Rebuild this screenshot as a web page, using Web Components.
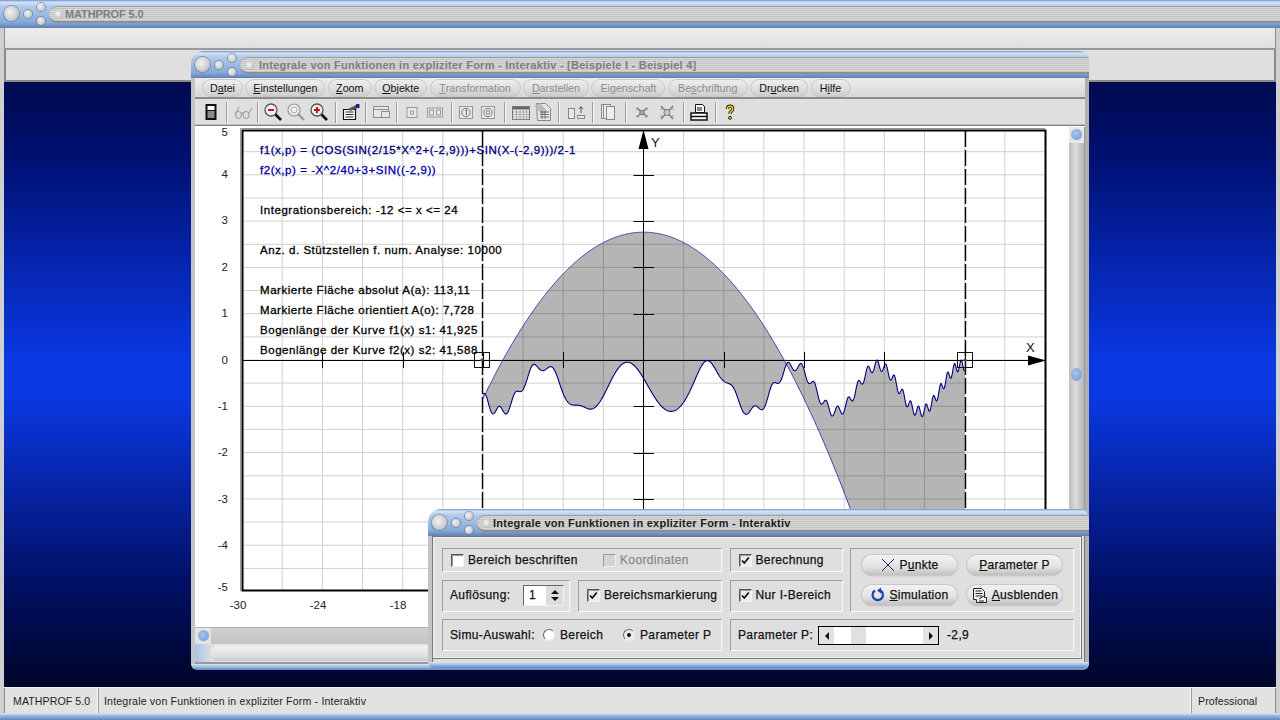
<![CDATA[<!DOCTYPE html>
<html lang="de"><head><meta charset="utf-8"><title>MATHPROF 5.0</title>
<style>html,body{margin:0;padding:0;background:#000;font:11px "Liberation Sans",Arial,sans-serif;overflow:hidden}</style>
<script>
const FONT='"Liberation Sans",Arial,sans-serif';
const LABEL=`font:12px ${FONT};-webkit-text-stroke:.25px currentColor;letter-spacing:.37px;color:#111;white-space:nowrap;`;
function el(name,html,hook){
  customElements.define(name,class extends HTMLElement{
    constructor(){super();const r=this.attachShadow({mode:'open'});
      r.innerHTML=typeof html==='function'?html(this):html;}
    connectedCallback(){if(hook)hook(this,this.shadowRoot);}
  });
}
el('mp-app',`<style>
:host{display:flex;flex-direction:column;width:1280px;height:720px;overflow:hidden;background:#cfcfcf;position:relative}
.side{flex:1;display:flex;flex-direction:column;padding:0 4px 0 4px;background:#cfcfcf;min-height:0}
.m{height:20px;background:linear-gradient(#ececec,#e0e0e0);border-left:1px solid #8a8a8a;border-right:1px solid #8a8a8a;border-bottom:2px solid #9a9a9a;flex:none}
.t{height:30px;background:#dfdfdf;border-left:2px solid #8a8a8a;border-right:2px solid #8a8a8a;border-bottom:2px solid #8a8a8a;flex:none}
.d{flex:1;position:relative;background:linear-gradient(180deg,#000a4e 0,#001070 12%,#0625b0 30%,#0a38e2 46%,#0a38e2 52%,#0725aa 66%,#000f60 84%,#000628 100%);min-height:0}
.e{height:7px;flex:none;background:linear-gradient(#dce8f6,#9ab8e0 40%,#5f86c0)}
</style>
<slot name="caption"></slot>
<div class="side"><div class="m"></div><div class="t"></div><div class="d"><slot></slot></div><slot name="status"></slot></div>
<div class="e"></div>`);

el('mp-caption',`<style>
:host{display:flex;align-items:center;height:var(--cap-h,27px);flex:none;box-sizing:border-box;position:relative;padding-left:3px;border-radius:inherit;
 background:linear-gradient(#6f97d2 0,#d5e3f4 8%,#b2cbea 22%,#86a9da 80%,#5f80b5 100%)}
.b{position:absolute;border-radius:50%;background:radial-gradient(circle at 40% 40%,#f2f2f2,#d0d0d0 55%,#a0a0a0);box-shadow:0 0 0 1px rgba(90,110,150,.55)}
.b1{left:4px;top:6px;width:15px;height:15px}.b2{left:24px;top:10px;width:8px;height:8px}
.b3{left:37px;top:3px;width:8px;height:8px}.b4{left:37px;top:17px;width:8px;height:8px}
.bar{position:absolute;left:49px;right:0;top:6px;height:17px;border-radius:9px 0 0 9px;box-sizing:border-box;display:flex;align-items:center;
 background:repeating-linear-gradient(#d8d8d8 0 1px,#c4c4c4 1px 2px);border-bottom:2px solid #8f8f8f;border-top:1px solid #9a9a9a}
.o{width:9px;height:9px;margin-left:5px;border-radius:50%;background:radial-gradient(circle at 45% 40%,#fafafa,#c0c0c0 70%,#8c8c8c);flex:none}
.txt{margin-left:var(--cap-ml,2px);font:bold 11px ${FONT};color:#1c1c1c;letter-spacing:var(--cap-ls,.25px);white-space:nowrap}
:host([inactive]) .txt{color:#7e7e7e}
</style>
<i class="b b1"></i><i class="b b2"></i><i class="b b3"></i><i class="b b4"></i>
<div class="bar"><i class="o"></i><span class="txt"><slot></slot></span></div>`);

el('mp-window',`<style>
:host{position:absolute;display:flex;flex-direction:column;box-sizing:border-box;border-radius:13px 9px 0 0;z-index:1}
.body{flex:1;min-height:0;display:flex;flex-direction:column;background:#dfdfdf;border-left:4px solid #c4c4c4;border-right:4px solid #b0b0b0;box-shadow:inset 1px 0 0 #777,inset -1px 0 0 #777}
.edge{height:6px;flex:none;border-radius:0 0 9px 9px;background:linear-gradient(#dbe6f5,#a8c2e6 40%,#5f86c0)}
::slotted(mp-caption){border-radius:13px 9px 0 0}
</style><slot name="caption"></slot><div class="body"><slot></slot></div><div class="edge"></div>`);

el('mp-menubar',`<style>
:host{display:flex;height:21px;padding:1px 0 0 7px;box-sizing:border-box;gap:2.4px;flex:none;background:linear-gradient(#ececec,#d8d8d8);border-bottom:2px solid #8c8c8c}
</style><slot></slot>`);
el('mp-menu',`<style>
:host{display:flex;align-items:center;justify-content:center;box-sizing:border-box;height:18px;border-radius:11px;font:10.7px ${FONT};color:#111;white-space:nowrap;
 background:linear-gradient(#f0f0f0,#d8d8d8 70%,#cacaca);box-shadow:inset 0 0 0 1px #c8c8c8}
:host([disabled]){color:#8c8c8c}
</style><slot></slot>`);

el('mp-toolbar',`<style>
:host{display:flex;align-items:center;height:27px;box-sizing:border-box;padding:0 0 0 5px;flex:none;background:#dfdfdf;border-bottom:1px solid #808080;box-shadow:inset 0 -1px 0 #c0c0c0}
</style><slot></slot>`);

const ICONS={
 device:`<rect x="6.5" y="4" width="11" height="16" fill="#111"/><rect x="8.5" y="6" width="7" height="4" fill="#fff"/><rect x="8.5" y="11" width="7" height="7" fill="#8a8a8a"/>`,
 glasses:`<g fill="none" stroke="#999" stroke-width="1"><ellipse cx="7.5" cy="15" rx="3" ry="3.6"/><ellipse cx="15" cy="15" rx="3" ry="3.6"/><path d="M10 13.5q2-1.5 3 0M4.8 13.5L8 7M17.8 13.5L21 8"/></g>`,
 zoomminus:`<circle cx="10" cy="10" r="6" fill="#eee" stroke="#555" stroke-width="1.3"/><path d="M14.5 14.5L20 20" stroke="#111" stroke-width="2.6"/><path d="M7 10h6" stroke="#c01818" stroke-width="2"/>`,
 zoomgray:`<circle cx="10" cy="10" r="6" fill="#f0f0f0" stroke="#999" stroke-width="1.2"/><circle cx="10" cy="10" r="3" fill="none" stroke="#aaa"/><path d="M14.5 14.5L20 20" stroke="#999" stroke-width="2.4"/>`,
 zoomplus:`<circle cx="10" cy="10" r="6" fill="#eee" stroke="#555" stroke-width="1.3"/><path d="M14.5 14.5L20 20" stroke="#111" stroke-width="2.6"/><path d="M7 10h6M10 7v6" stroke="#c01818" stroke-width="2"/>`,
 form:`<path d="M4.5 9.5h12v10h-12z" fill="#fff" stroke="#111" stroke-width="1.2"/><path d="M6.5 12h8M6.5 14.5h8M6.5 17h8" stroke="#222"/><path d="M9 9l8-4 2 3-8 3z" fill="#555"/><path d="M17 4h3.5v4H17z" fill="#1a2a90"/>`,
 win:`<g fill="#e6e6e6" stroke="#8e8e8e"><rect x="4.5" y="6.5" width="15" height="11"/><path d="M4.5 9.5h15" fill="none"/><rect x="12.5" y="11.5" width="8" height="6"/></g>`,
 box1:`<rect x="7" y="7.5" width="10" height="10" fill="#e8e8e8" stroke="#999"/><rect x="10.5" y="11" width="3" height="3" fill="none" stroke="#999"/>`,
 box2:`<g fill="#e8e8e8" stroke="#999"><rect x="4.5" y="8" width="15" height="9"/><rect x="6.5" y="10" width="4" height="5"/><rect x="13.5" y="10" width="4" height="5"/></g>`,
 circ1:`<rect x="5.5" y="6.5" width="13" height="12" fill="#e8e8e8" stroke="#999"/><circle cx="12" cy="12.5" r="4.2" fill="none" stroke="#777"/><path d="M11 10.7l1.5-1v5.5" fill="none" stroke="#777"/>`,
 circ2:`<rect x="5.5" y="6.5" width="13" height="12" fill="#e8e8e8" stroke="#999"/><circle cx="12" cy="12.5" r="4.2" fill="none" stroke="#777"/><circle cx="12" cy="12.5" r="1.8" fill="none" stroke="#777"/>`,
 table:`<rect x="3.5" y="6.5" width="17" height="13" fill="#eee" stroke="#777"/><rect x="4" y="7" width="16" height="2.5" fill="#666"/><path d="M4 12h16M4 14.5h16M4 17h16M7.5 9.5v10M11 9.5v10M14.5 9.5v10M17.5 9.5v10" stroke="#aaa"/>`,
 calc:`<path d="M5.5 3.5h9l5 5v12h-13z" fill="#e6e6e6" stroke="#888"/><path d="M3 6l6-3 8 9-5 3z" fill="#bbb"/><path d="M9 12h9M9 14.5h9M9 17h9M11 11v8M14 11v8" stroke="#777"/>`,
 arrows:`<g fill="#e8e8e8" stroke="#888"><rect x="4.5" y="8.5" width="6" height="10"/><rect x="13.5" y="15.5" width="7" height="3"/></g><path d="M17 13V7M15 9L17 6.5 19 9" fill="none" stroke="#555"/>`,
 pages:`<g fill="#eee" stroke="#888"><rect x="5.5" y="4.5" width="7" height="14"/><rect x="7.5" y="4.5" width="7" height="14"/><rect x="10.5" y="6.5" width="8" height="13"/></g>`,
 cross1:`<path d="M7 8l10 9M17 8L7 17" stroke="#777" stroke-width="1.5"/><circle cx="12" cy="12.5" r="2.3" fill="#aaa" stroke="#777"/><path d="M6 10l2-3M16 7l2 3M6 15l2 3M16 18l2-3" stroke="#999"/>`,
 cross2:`<path d="M6 6l12 13M18 6L6 19" stroke="#777" stroke-width="1.3"/><circle cx="12" cy="12.5" r="3" fill="#ccc" stroke="#777"/><path d="M5 9h4M15 9h4M5 16h4M15 16h4" stroke="#999"/>`,
 printer:`<path d="M8.5 4.5h7l2 2v6h-9z" fill="#fff" stroke="#111"/><path d="M10 8h5M10 10h5" stroke="#111"/><path d="M4 13h16v7H4z" fill="#fff" stroke="#111" stroke-width="1.5"/><path d="M4 16.5h16" stroke="#111" stroke-width="1.5"/>`,
 help:`<path d="M9.3 9q0-2.8 2.7-2.8t2.7 2.7q0 1.6-1.7 2.6-1 .8-1 2.5" fill="none" stroke="#222" stroke-width="3.2"/><path d="M9.3 9q0-2.8 2.7-2.8t2.7 2.7q0 1.6-1.7 2.6-1 .8-1 2.5" fill="none" stroke="#e8d020" stroke-width="1.5"/><circle cx="12" cy="17.8" r="1.5" fill="#e8d020" stroke="#222"/>`
};
el('mp-tool',`<style>:host{display:flex;justify-content:flex-end;align-items:center;height:26px;flex:none}
#h{display:flex;justify-content:center;align-items:center;flex:none;width:0}
svg{flex:none;display:block}i{display:block;flex:none;width:1px;height:21px;background:#9a9a9a;box-shadow:1px 0 0 #f6f6f6}</style><span id="h"></span>`,(e,r)=>{
  e.style.width=e.getAttribute('w')+'px';
  const n=e.getAttribute('i');
  r.getElementById('h').innerHTML=n==='sep'?'<i></i>':`<svg width="24" height="24" viewBox="0 0 24 24" aria-hidden="true">${ICONS[n]}</svg>`;
});

el('mp-client',`<style>
:host{flex:1;min-height:0;display:grid;grid-template-columns:1fr 16px;grid-template-rows:1fr 17px 18px;background:#fff;border-top:1px solid #fff;border-bottom:2px solid #999}
.v{grid-area:1/2/3/3;position:relative;background:linear-gradient(90deg,#bdbdbd,#dcdcdc 45%,#b6b6b6);border-right:1px solid #999}
.v i{position:absolute;left:2px;width:11px;border-radius:50%;background:radial-gradient(circle at 40% 40%,#a8c4ea,#6f97d2)}
.v .a{top:2px;height:11px}.v .b{top:241px;height:13px}
.vt{position:absolute;left:0;right:0;top:0;height:16px;background:#e8e8e8}
.h{grid-area:2/1/3/2;position:relative;background:linear-gradient(#cfcfcf,#c4c4c4);border-top:1px solid #b0b0b0}
.h i{position:absolute;left:3px;top:2px;width:11px;height:11px;border-radius:50%;background:radial-gradient(circle at 40% 40%,#a8c4ea,#6f97d2)}
.hl{position:absolute;left:0;top:0;bottom:0;width:16px;background:#e4e4e4}
.r{grid-area:3/1/4/3;background:linear-gradient(90deg,#a9c4e8,#e4e4e4 20px);padding:2px 0 1px 15px;box-sizing:border-box}
.r b{display:block;height:100%;border-radius:8px 0 0 8px;background:linear-gradient(#f2f2f2,#dedede 70%,#c8c8c8)}
.p{grid-area:1/1/2/2;min-height:0;position:relative;overflow:hidden}
</style><div class="p"><slot></slot></div><div class="v"><div class="vt"></div><i class="a"></i><i class="b"></i></div><div class="h"><div class="hl"></div><i></i></div><div class="r"><b></b></div>`);

const P=-2.9, X0=643.5, UX=13.38, Y0=360, UY=46.3;
const sx=x=>X0+UX*x, sy=y=>Y0-UY*y;
const f1=x=>(Math.cos(Math.sin(2/15*x*x+P))+Math.sin(x-P))/2-1;
const f2=x=>-x*x/40+3+Math.sin(P);
function plotSVG(){
  const l=242.5,r=1045.5,t=130.5,b=590.5; let s='';
  for(let u=-27;u<30;u+=3)s+=`M${sx(u).toFixed(1)} ${t}V${b}`;
  let g='';for(let v=-4.5;v<=4.5;v+=.5)g+=`M${l} ${sy(v).toFixed(1)}H${r}`;
  const a=[];
  for(let x=-12;x<=24.001;x+=.04)a.push(x);
  const p1=a.map(x=>`${sx(x).toFixed(2)} ${sy(f1(x)).toFixed(2)}`);
  const p2=a.map(x=>`${sx(x).toFixed(2)} ${sy(f2(x)).toFixed(2)}`);
  let ticks='';
  [-24,-18,-12,-6,6,12,18,24].forEach(u=>ticks+=`M${Math.round(sx(u))+.5} 352V368`);
  [-4,-3,-2,-1,1,2,3,4].forEach(v=>ticks+=`M633.5 ${Math.round(sy(v))+.5}H654`);
  const yl=[[5,132],[4,174],[3,220],[2,267],[1,313],[0,360],[-1,406],[-2,452],[-3,499],[-4,545],[-5,587]];
  const xl=[[-30,238],[-24,318],[-18,398]];
  const info=[['f1(x,p) = (COS(SIN(2/15*X^2+(-2,9)))+SIN(X-(-2,9)))/2-1',154,'#000080'],
   ['f2(x,p) = -X^2/40+3+SIN((-2,9))',174,'#0000a8'],
   ['Integrationsbereich: -12 <= x <= 24',214,'#000'],
   ['Anz. d. Stützstellen f. num. Analyse: 10000',254,'#000'],
   ['Markierte Fläche absolut A(a): 113,11',294,'#000'],
   ['Markierte Fläche orientiert A(o): 7,728',314,'#000'],
   ['Bogenlänge der Kurve f1(x) s1: 41,925',334,'#000'],
   ['Bogenlänge der Kurve f2(x) s2: 41,588',354,'#000']];
  const esc=t=>t.replace(/&/g,'&amp;').replace(/</g,'&lt;');
  const mark=cx=>`<rect x="${cx-7.5}" y="352.5" width="15" height="15" fill="none" stroke="#111"/><path d="M${cx} 358l2 2-2 2-2-2z" fill="#555"/>`;
  return `<svg width="874" height="500" viewBox="195 127 874 500" font-family='"Liberation Sans",Arial,sans-serif'>
  <rect x="195" y="127" width="874" height="500" fill="#fff"/>
  <path d="${s}${g}" stroke="#d0d0d0" fill="none"/>
  <path d="M${p1.join('L')}L${p2.slice().reverse().join('L')}Z" fill="rgba(0,0,0,.29)" stroke="none"/>
  <path d="M240.5 128.5H1045" stroke="#999" fill="none"/>
  <path d="M240.5 128.5V591" stroke="#999" fill="none"/>
  <rect x="242.5" y="130.5" width="803" height="460" fill="none" stroke="#000" stroke-width="2"/>
  <path d="M482.5 131V590M965.5 131V590" stroke="#000" stroke-width="1.4" stroke-dasharray="16 3"/>
  <path d="${ticks}" stroke="#000" fill="none"/>
  <path d="M242 360.5H1030M643.5 590V148" stroke="#000" fill="none"/>
  <path d="M${p2.join('L')}" stroke="#3838a8" fill="none"/>
  <path d="M${p1.join('L')}" stroke="#000080" fill="none" stroke-width="1.1"/>
  <path d="M1028 355.5L1046 360.5L1028 365.5Z M643.5 130L648.5 149H638.5Z" fill="#000"/>
  ${mark(482)}${mark(965)}
  <text x="651" y="147" font-size="13" fill="#111" letter-spacing=".3">Y</text>
  <text x="1026" y="352" font-size="13" fill="#111">X</text>
  ${yl.map(([v,y])=>`<text x="228" y="${y+4}" text-anchor="end" font-size="11.5" fill="#222">${v}</text>`).join('')}
  ${xl.map(([v,x])=>`<text x="${x}" y="609" text-anchor="middle" font-size="11.5" fill="#222">${v}</text>`).join('')}
  <g font-size="11.5" style="stroke-width:.3px;letter-spacing:.55px">
  ${info.map(([t,y,c])=>`<text x="260" y="${y}" fill="${c}" stroke="${c}">${esc(t)}</text>`).join('')}
  </g></svg>`;
}
el('mp-plot',`<style>:host{display:block;position:absolute;inset:0}svg{display:block}</style>`+plotSVG());

el('mp-dialog',`<style>
:host{flex:1;min-height:0;box-sizing:border-box;display:grid;grid-template-columns:128px 8px 144px 8px 113px 7px 224px;grid-template-rows:24px 8px 32px 7px 32px;padding:11px 0 0 9px;margin:0 3px 3px 0;background:#dfdfdf;align-content:start;
 border:1px solid #777;box-shadow:inset 0 0 0 1px #f0f0f0}
</style><slot></slot>`);
el('mp-group',`<style>:host{display:flex;align-items:center;box-sizing:border-box;border:1px solid;border-color:#9c9c9c #fafafa #fafafa #9c9c9c;min-width:0}</style><slot></slot>`);
el('mp-label',`<style>:host{display:inline-block;flex:none;${LABEL}}</style><slot></slot>`);
el('mp-check',`<style>
:host{display:inline-flex;align-items:center;flex:none;${LABEL}}
.b{width:13px;height:13px;box-sizing:border-box;background:#fff;border:1px solid;border-color:#555 #f4f4f4 #f4f4f4 #555;box-shadow:inset 1px 1px 0 #999;margin-right:4px;flex:none;display:block}
svg{display:none;width:11px;height:11px}
:host([checked]) .b{background:#ececec}:host([checked]) svg{display:block}
:host([disabled]){color:#8a8a8a}:host([disabled]) .b{background:#d4d4d4;border-color:#9a9a9a #f0f0f0 #f0f0f0 #9a9a9a;box-shadow:none}
</style><span class="b"><svg viewBox="0 0 11 11"><path d="M2 5.5l2.3 2.5 4.5-5.5" fill="none" stroke="#111" stroke-width="1.8"/></svg></span><slot></slot>`);
el('mp-radio',`<style>
:host{display:inline-flex;align-items:center;flex:none;${LABEL}}
.r{width:12px;height:12px;border-radius:50%;box-sizing:border-box;background:#fff;border:1px solid;border-color:#666 #eee #eee #666;margin-right:5px;display:flex;align-items:center;justify-content:center;flex:none}
.r i{display:none;width:4px;height:4px;border-radius:50%;background:#111}
:host([checked]) .r{background:#ececec}:host([checked]) i{display:block}
</style><span class="r"><i></i></span><slot></slot>`);
el('mp-spin',`<style>
:host{display:flex;width:41px;height:21px;flex:none;box-sizing:border-box;border:1px solid;border-color:#666 #f2f2f2 #f2f2f2 #666;${LABEL}font-size:12px;background:#fff}
.v{width:22px;padding-left:5px;box-sizing:border-box;line-height:19px}
.s{flex:1;background:#dcdcdc;display:flex;flex-direction:column;align-items:center;justify-content:center;gap:3px}
.s i{display:block;width:0;height:0;border-left:4px solid transparent;border-right:4px solid transparent}
.u{border-bottom:4px solid #111}.d{border-top:4px solid #111}
</style><span class="v"><slot></slot></span><span class="s"><i class="u"></i><i class="d"></i></span>`);
el('mp-hscroll',`<style>
:host{display:flex;width:121px;height:19px;flex:none;box-sizing:border-box;border:1px solid #000;background:#fff;margin-top:1px}
.a{width:15px;background:#e2e2e2;display:flex;align-items:center;justify-content:center}
.a i{display:block;width:0;height:0;border-top:4px solid transparent;border-bottom:4px solid transparent}
.l{border-right:4px solid #111}.r{border-left:4px solid #111}
.t{width:15px;margin-left:17px;background:#e0e0e0}.f{flex:1}
</style><span class="a"><i class="l"></i></span><span class="t"></span><span class="f"></span><span class="a"><i class="r"></i></span>`);
const BI={
 x:`<svg width="16" height="16" viewBox="0 0 16 16"><path d="M2 2q6 6 12 12M14 2Q8 8 2 14" fill="none" stroke="#1a2460"/></svg>`,
 loop:`<svg width="16" height="16" viewBox="0 0 16 16"><path d="M5 3.5a5.2 5.2 0 1 0 5.5 0" fill="none" stroke="#1a44b0" stroke-width="2.2"/><path d="M10 0.5v6l-4-3z" fill="#1a44b0" transform="translate(1 0)"/></svg>`,
 doc:`<svg width="18" height="18" viewBox="0 0 18 18"><path d="M2.5 2.5h8l3 3v6h2v5h-10v-3h-3z" fill="#f2f2f2" stroke="#222"/><path d="M4.5 5h6M4.5 7.5h7M4.5 10h7M8 13l5-3M8 15h5" stroke="#222"/></svg>`
};
el('mp-btn',`<style>
:host{display:flex;align-items:center;justify-content:center;height:20px;box-sizing:border-box;border-radius:10px;gap:3px;${LABEL}letter-spacing:.3px;
 background:linear-gradient(#f2f2f2,#e2e2e2 60%,#c0c0c0);box-shadow:0 0 0 1px #c8c8c8,0 1px 1px #909090}
svg{display:block;flex:none}
</style><span id="i"></span><span><slot></slot></span>`,(e,r)=>{
  const n=e.getAttribute('i'),h=r.getElementById('i');
  if(n){h.innerHTML=BI[n];h.style.display='flex';}else h.remove();
});
el('mp-status',`<style>
:host{display:flex;height:26px;flex:none;background:#e2e2e2;border-top:1px solid #f4f4f4;box-sizing:border-box;font:10.6px ${FONT};color:#222;letter-spacing:.17px}
span{display:flex;align-items:center;box-sizing:border-box;white-space:nowrap;border-left:1px solid #9a9a9a;border-right:1px solid #f8f8f8;padding-top:1px}
.a{width:94px;padding-left:8px;border-left:1px solid #888;letter-spacing:.08px}.b{flex:1;padding-left:5px}.c{width:85px;padding-left:6px;border-right:1px solid #888;letter-spacing:.08px}
</style><span class="a">MATHPROF 5.0</span><span class="b">Integrale von Funktionen in expliziter Form - Interaktiv</span><span class="c">Professional</span>`);
</script></head>
<body><mp-app>
  <mp-caption slot="caption" inactive style="--cap-ls:-.12px;--cap-h:28px">MATHPROF 5.0</mp-caption>
  <mp-window style="left:187px;top:-31px;width:898px;height:619px;--cap-ml:5px">
    <mp-caption slot="caption" inactive>Integrale von Funktionen in expliziter Form - Interaktiv - [Beispiele I - Beispiel 4]</mp-caption>
    <mp-menubar>
      <mp-menu style="width:41px">D<u>a</u>tei</mp-menu><mp-menu style="width:80px"><u>E</u>instellungen</mp-menu><mp-menu style="width:44px"><u>Z</u>oom</mp-menu><mp-menu style="width:53px"><u>O</u>bjekte</mp-menu><mp-menu disabled style="width:91px"><u>T</u>ransformation</mp-menu><mp-menu disabled style="width:66px"><u>D</u>arstellen</mp-menu><mp-menu disabled style="width:74px">Ei<u>g</u>enschaft</mp-menu><mp-menu disabled style="width:80px">Be<u>s</u>chriftung</mp-menu><mp-menu style="width:58px">Dr<u>u</u>cken</mp-menu><mp-menu style="width:40px">H<u>i</u>lfe</mp-menu>
    </mp-menubar>
    <mp-toolbar>
      <mp-tool w="11" i="device"></mp-tool><mp-tool w="15" i="sep"></mp-tool><mp-tool w="17" i="glasses"></mp-tool><mp-tool w="14" i="sep"></mp-tool><mp-tool w="16" i="zoomminus"></mp-tool><mp-tool w="23" i="zoomgray"></mp-tool><mp-tool w="23" i="zoomplus"></mp-tool><mp-tool w="16" i="sep"></mp-tool><mp-tool w="16" i="form"></mp-tool><mp-tool w="14" i="sep"></mp-tool><mp-tool w="16" i="win"></mp-tool><mp-tool w="15" i="sep"></mp-tool><mp-tool w="16" i="box1"></mp-tool><mp-tool w="23" i="box2"></mp-tool><mp-tool w="16" i="sep"></mp-tool><mp-tool w="15" i="circ1"></mp-tool><mp-tool w="22" i="circ2"></mp-tool><mp-tool w="16" i="sep"></mp-tool><mp-tool w="17" i="table"></mp-tool><mp-tool w="22" i="calc"></mp-tool><mp-tool w="15" i="sep"></mp-tool><mp-tool w="18" i="arrows"></mp-tool><mp-tool w="16" i="sep"></mp-tool><mp-tool w="16" i="pages"></mp-tool><mp-tool w="17" i="sep"></mp-tool><mp-tool w="17" i="cross1"></mp-tool><mp-tool w="25" i="cross2"></mp-tool><mp-tool w="16" i="sep"></mp-tool><mp-tool w="16" i="printer"></mp-tool><mp-tool w="16" i="sep"></mp-tool><mp-tool w="15" i="help"></mp-tool>
    </mp-toolbar>
    <mp-client><mp-plot></mp-plot></mp-client>
  </mp-window>
  <mp-window style="left:424px;top:427px;width:661px;height:159px">
    <mp-caption slot="caption">Integrale von Funktionen in expliziter Form - Interaktiv</mp-caption>
    <mp-dialog>
      <mp-group style="grid-area:1/1/2/4;padding-left:8px">
        <mp-check style="width:152px">Bereich beschriften</mp-check><mp-check disabled>Koordinaten</mp-check>
      </mp-group>
      <mp-group style="grid-area:1/5/2/6;padding-left:7.5px"><mp-check checked>Berechnung</mp-check></mp-group>
      <mp-group style="grid-area:1/7/4/8;display:grid;grid-template-columns:95px 95px;gap:10px 10px;padding:6px 0 0 11px;align-content:start;align-items:start">
        <mp-btn i="x">P<u>u</u>nkte</mp-btn><mp-btn><u>P</u>arameter P</mp-btn>
        <mp-btn i="loop"><u>S</u>imulation</mp-btn><mp-btn i="doc"><u>A</u>usblenden</mp-btn>
      </mp-group>
      <mp-group style="grid-area:3/1/4/2;padding:0 0 2px 7px"><mp-label style="width:73px">Auflösung:</mp-label><mp-spin>1</mp-spin></mp-group>
      <mp-group style="grid-area:3/3/4/4;padding:0 0 2px 8px"><mp-check checked>Bereichsmarkierung</mp-check></mp-group>
      <mp-group style="grid-area:3/5/4/6;padding:0 0 2px 7.5px"><mp-check checked>Nur I-Bereich</mp-check></mp-group>
      <mp-group style="grid-area:5/1/6/4;padding-left:7px"><mp-label style="width:93px">Simu-Auswahl:</mp-label><mp-radio style="width:80px">Bereich</mp-radio><mp-radio checked>Parameter P</mp-radio></mp-group>
      <mp-group style="grid-area:5/5/6/8;padding-left:7px"><mp-label style="width:80px">Parameter P:</mp-label><mp-hscroll></mp-hscroll><mp-label style="margin-left:8px">-2,9</mp-label></mp-group>
    </mp-dialog>
  </mp-window>
  <mp-status slot="status"></mp-status>
</mp-app></body></html>]]>
